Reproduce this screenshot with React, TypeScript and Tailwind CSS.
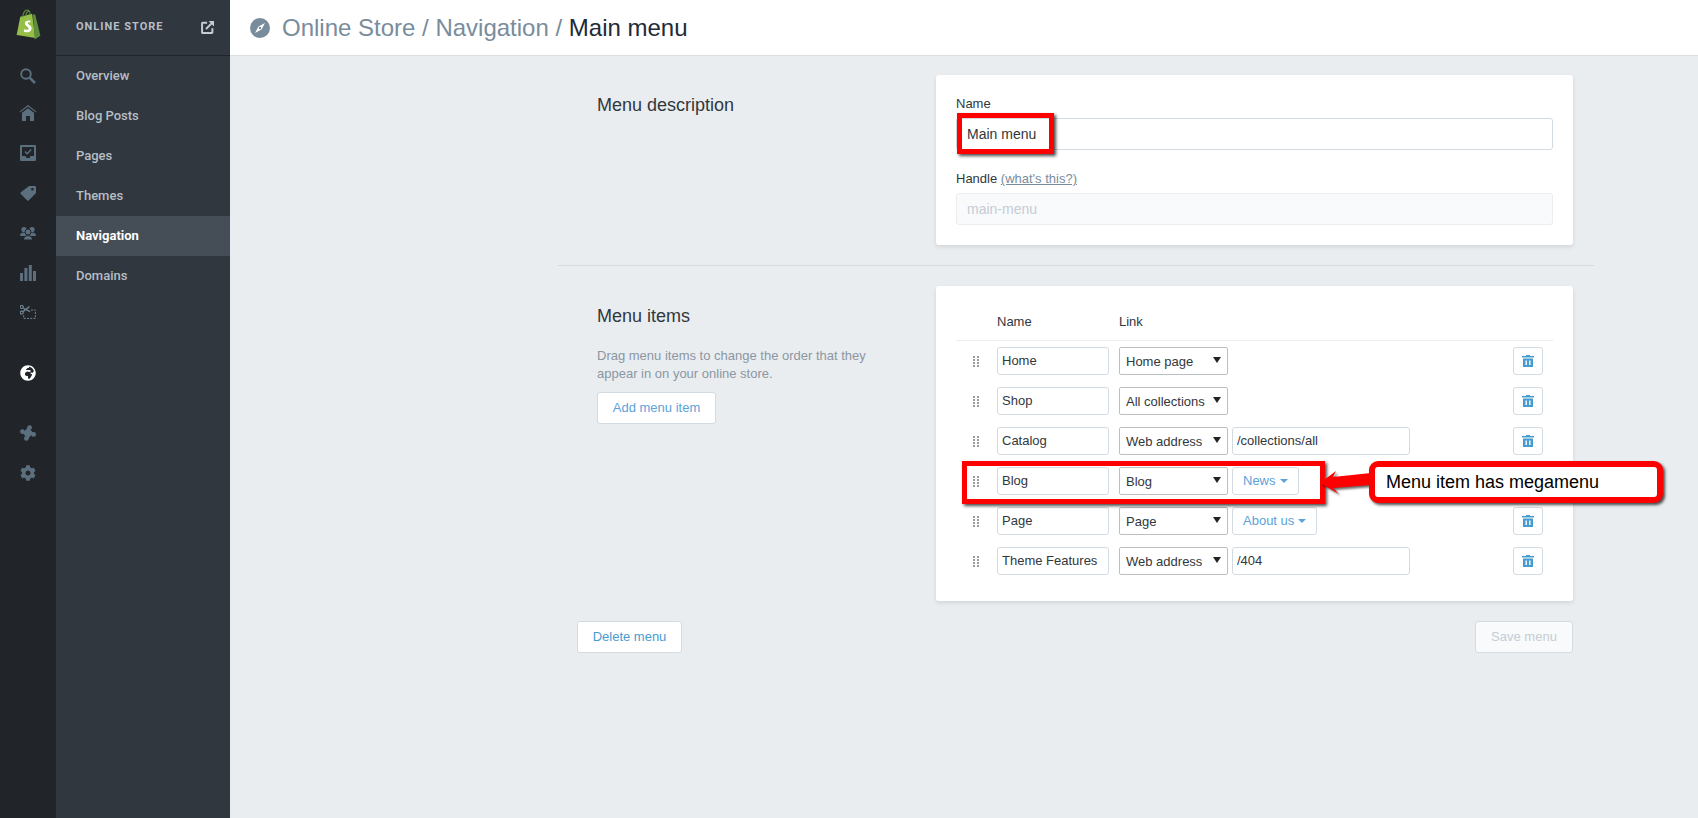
import React from 'react';
import { FaCog, FaGlobeAfrica } from 'react-icons/fa';

const storeLinks = ['Overview', 'Blog Posts', 'Pages', 'Themes', 'Navigation', 'Domains'];

type MenuRow = { name: string; link: string; target?: string; picker?: string };

const menuRows: MenuRow[] = [
  { name: 'Home', link: 'Home page' },
  { name: 'Shop', link: 'All collections' },
  { name: 'Catalog', link: 'Web address', target: '/collections/all' },
  { name: 'Blog', link: 'Blog', picker: 'News' },
  { name: 'Page', link: 'Page', picker: 'About us' },
  { name: 'Theme Features', link: 'Web address', target: '/404' },
];

const ShopifyLogo = () => (
  <svg width="28" height="31" viewBox="0 0 26 30">
    <path d="M2 25.5 5.5 7.5 17 4.5 20 28 1 25z" fill="#95bf47" />
    <path d="M17.8 5.2 20 5.6 25 26 19.5 29.5z" fill="#5e8e3e" />
    <path d="M8 8c0-4 2-7 4-7s3 2 3 5M11 7c0-3 1-5 3-5" fill="none" stroke="#5e8e3e" strokeWidth="1.1" />
    <path d="M15.6 11.5c-3-1.2-5.6.2-5.6 2.6 0 2.5 3.6 2.8 3.6 4.7 0 1.6-2.2 1.7-4 .5l-.7 2.6c3.6 1.6 7.6.4 7.6-3.2 0-3-3.6-3.2-3.6-4.8 0-1 1.4-1.2 2.2-.8z" fill="#fff" />
  </svg>
);

const SearchIcon = () => (
  <svg width="16" height="16" viewBox="0 0 16 16" fill="none" stroke="#5c6f7f">
    <circle cx="6" cy="6" r="4.8" strokeWidth="1.9" />
    <path d="M9.8 9.8 15 15" strokeWidth="2.6" />
  </svg>
);

const HouseIcon = () => (
  <svg width="16" height="16" viewBox="0 0 16 16" fill="#5c6f7f">
    <path d="M8 0 16 6.2V7.6L8 1.6 0 7.6V6.2z" />
    <path fillRule="evenodd" d="M8 3.2 14 7.8V16H10V11H6V16H2V7.8z" />
  </svg>
);

const InboxIcon = () => (
  <svg width="16" height="16" viewBox="0 0 16 16">
    <path fillRule="evenodd" d="M1 0h14a1 1 0 0 1 1 1v14a1 1 0 0 1-1 1H1a1 1 0 0 1-1-1V1a1 1 0 0 1 1-1zm1 2v9h3.5l1 2h3l1-2H14V2z" fill="#5c6f7f" />
    <path d="M5 6.5 7.2 8.7 11.2 4.6" fill="none" stroke="#5c6f7f" strokeWidth="1.5" />
  </svg>
);

const TagIcon = () => (
  <svg width="16" height="16" viewBox="0 0 16 16">
    <path fillRule="evenodd" d="M9 1h5.8c.7 0 1.2.5 1.2 1.2V8l-7.4 7.4c-.4.4-1 .4-1.4 0L.6 8.8c-.4-.4-.4-1 0-1.4zM12.4 3a1.3 1.3 0 1 0 0 2.6 1.3 1.3 0 0 0 0-2.6z" fill="#5c6f7f" />
  </svg>
);

const PeopleIcon = () => (
  <svg width="16" height="14" viewBox="0 0 16 14" fill="#5c6f7f">
    <circle cx="4" cy="3.5" r="2.6" />
    <circle cx="12" cy="3.5" r="2.6" />
    <path d="M0 10c0-2.4 1.6-3.4 4-3.4s4 1 4 3.4zM8 10c0-2.4 1.6-3.4 4-3.4s4 1 4 3.4z" />
    <circle cx="8" cy="6" r="3" stroke="#212529" />
    <path d="M3.4 14c0-3 2-4.4 4.6-4.4s4.6 1.4 4.6 4.4z" stroke="#212529" />
  </svg>
);

const BarsIcon = () => (
  <svg width="16" height="16" viewBox="0 0 16 16" fill="#5c6f7f">
    <rect x="0" y="8" width="3" height="8" />
    <rect x="4.4" y="3" width="3" height="13" />
    <rect x="8.8" y="0" width="3" height="16" />
    <rect x="13" y="6" width="3" height="10" />
  </svg>
);

const ScissorsIcon = () => (
  <svg width="16" height="14" viewBox="0 0 16 14" fill="none" stroke="#6f8292" strokeWidth="1.2">
    <circle cx="1.8" cy="2" r="1.5" />
    <circle cx="1.8" cy="7.6" r="1.5" />
    <path d="M3 3 10 6.6M3 6.6 9.5 1.5" strokeWidth="1.4" />
    <path d="M11 5h4.4v8.4H3.7V10" strokeDasharray="2 1.2" strokeWidth="1" />
  </svg>
);

const PuzzleIcon = () => (
  <svg width="16" height="16" viewBox="0 0 16 16" fill="#5c6f7f">
    <polygon points="8,2.5 13.5,8 8,13.5 2.5,8" />
    <circle cx="9.6" cy="2.6" r="2.4" />
    <circle cx="2.4" cy="6.6" r="2.4" />
    <circle cx="13.6" cy="9.4" r="2.4" />
    <circle cx="6.4" cy="13.4" r="2.4" />
  </svg>
);

const ExternalIcon = () => (
  <svg width="13" height="13" viewBox="0 0 12 12" fill="none" stroke="#c4cdd5" strokeWidth="1.8">
    <path d="M5.6 1.6H1.4a.4.4 0 0 0-.4.4v8.6c0 .3.2.5.5.5h8.6c.2 0 .4-.2.4-.4V6.6" />
    <path d="M4.6 7.4 10 2" />
    <path d="M7 0h5v5z" fill="#c4cdd5" stroke="none" />
  </svg>
);

const CompassIcon = () => (
  <svg width="20" height="20" viewBox="0 0 20 20">
    <circle cx="10" cy="10" r="10" fill="#798c9c" />
    <path d="M15 5 11.5 11.5 5 15 8.5 8.5z" fill="#fff" />
    <circle cx="10" cy="10" r="1.2" fill="#798c9c" />
  </svg>
);

const DragHandle = () => (
  <svg width="6" height="11" viewBox="0 0 6 11" fill="#9a9a9a">
    {[0, 3, 6, 9].map((y) => (
      <React.Fragment key={y}>
        <rect x="0" y={y} width="2" height="2" />
        <rect x="4" y={y} width="2" height="2" />
      </React.Fragment>
    ))}
  </svg>
);

const TrashIcon = () => (
  <svg width="12" height="12" viewBox="0 0 12 12">
    <path d="M4 0h4v1h4v1.6H0V1h4z" fill="#479ccf" />
    <path fillRule="evenodd" d="M1 3.6h10V12H1zM3.5 5.5v4.5h1.4V5.5zm3.6 0v4.5h1.4V5.5z" fill="#479ccf" />
  </svg>
);

const LinkSelect = ({ value }: { value: string }) => (
  <div className="relative w-[109px] h-7 shrink-0">
    <select
      defaultValue={value}
      className="w-full h-full appearance-none bg-white border border-[#bcbfc2] rounded-[2px] pl-[6px] pt-[2px] text-[13px] text-[#31373d] outline-none"
    >
      <option>{value}</option>
    </select>
    <span className="absolute right-[7px] top-[10px] w-0 h-0 border-x-[4px] border-x-transparent border-t-[6px] border-t-[#222]" />
  </div>
);

const TextField = ({ value, width }: { value: string; width: string }) => (
  <input
    readOnly
    defaultValue={value}
    className={`${width} h-7 shrink-0 bg-white border border-[#d3dbe2] rounded-[3px] px-1 pb-[2px] text-[13px] text-[#31373d] outline-none`}
  />
);

const Row = ({ row }: { row: MenuRow }) => (
  <div className="flex items-center h-7">
    <div className="w-[41px] pl-[17px] flex items-center shrink-0">
      <DragHandle />
    </div>
    <TextField value={row.name} width="w-[112px]" />
    <div className="ml-[10px]">
      <LinkSelect value={row.link} />
    </div>
    {row.target && (
      <div className="ml-1">
        <TextField value={row.target} width="w-[178px]" />
      </div>
    )}
    {row.picker && (
      <button className="ml-1 h-7 px-[10px] flex items-center gap-1 bg-white border border-[#d3dbe2] rounded-[3px] text-[13px] text-[#5ba3da]">
        {row.picker}
        <span className="w-0 h-0 border-x-[4px] border-x-transparent border-t-[4px] border-t-[#5ba3da]" />
      </button>
    )}
    <button className="ml-auto mr-[10px] w-[30px] h-7 flex items-center justify-center bg-white border border-[#d3dbe2] rounded-[3px]">
      <TrashIcon />
    </button>
  </div>
);

export default function App() {
  return (
    <div
      className="relative flex h-[818px] w-full overflow-hidden bg-[#e9edf0]"
      style={{ fontFamily: '"Liberation Sans", Arial, sans-serif' }}
    >
      {/* icon rail */}
      <aside className="w-14 shrink-0 bg-[#212529] flex flex-col items-center text-[#5c6f7f]">
        <div className="h-[59px] pt-[9px]">
          <ShopifyLogo />
        </div>
        <div className="flex flex-col items-center">
          <div className="h-[34px] flex items-center"><SearchIcon /></div>
          <div className="h-10 flex items-center"><HouseIcon /></div>
          <div className="h-10 flex items-center"><InboxIcon /></div>
          <div className="h-10 flex items-center"><TagIcon /></div>
          <div className="h-10 flex items-center"><PeopleIcon /></div>
          <div className="h-10 flex items-center"><BarsIcon /></div>
          <div className="h-[38px] flex items-center"><ScissorsIcon /></div>
        </div>
        <div className="mt-[22px] h-10 flex items-center text-white"><FaGlobeAfrica size={16} /></div>
        <div className="mt-5 h-10 flex items-center"><PuzzleIcon /></div>
        <div className="h-10 flex items-center"><FaCog size={16} /></div>
      </aside>

      {/* store menu */}
      <nav className="w-[174px] shrink-0 bg-[#31373f]" style={{ fontFamily: 'Roboto, sans-serif' }}>
        <div className="h-[56px] flex items-center justify-between pl-5 pr-4 border-b border-[#212529]">
          <span className="text-[11px] font-bold tracking-[1px] text-[#b6bec6]">ONLINE STORE</span>
          <ExternalIcon />
        </div>
        <div>
          {storeLinks.map((link) => (
            <div
              key={link}
              className={`h-10 flex items-center pl-5 text-[13px] ${
                link === 'Navigation' ? 'bg-[#454e57] text-white font-bold' : 'text-[#b6bec6] font-medium'
              }`}
            >
              {link}
            </div>
          ))}
        </div>
      </nav>

      <main className="flex-1 min-w-0 flex flex-col">
        <header className="h-[56px] shrink-0 bg-white border-b border-[#dcdfe2] flex items-center pl-5 gap-3">
          <CompassIcon />
          <h1 className="text-[24px] text-[#798c9c]">
            Online Store / Navigation / <span className="text-[#212b36]">Main menu</span>
          </h1>
        </header>

        <div className="ml-[328px] w-[1036px] pt-[19px]">
          <section className="flex">
            <div className="w-[378px] pl-[39px] pt-[19px] shrink-0">
              <h2 className="text-[18px] leading-[22px] text-[#31373d]">Menu description</h2>
            </div>
            <div className="w-[637px] h-[170px] bg-white rounded-[3px] shadow-[0_2px_4px_rgba(0,0,0,0.1)] px-5 pt-[21px]">
              <label className="block text-[13px] leading-[16px] h-[22px] text-[#31373d]">Name</label>
              <input
                readOnly
                defaultValue="Main menu"
                className="w-full h-8 border border-[#d3dbe2] rounded-[3px] px-[10px] text-[14px] text-[#31373d] outline-none"
              />
              <div className="mt-[21px] h-[22px] text-[13px] leading-[16px] text-[#31373d]">
                Handle <a className="text-[#798c9c] underline">(what's this?)</a>
              </div>
              <input
                readOnly
                defaultValue="main-menu"
                className="w-full h-8 bg-[#f9fafb] border border-[#ebeef0] rounded-[3px] px-[10px] text-[14px] text-[#c4cdd5] outline-none"
              />
            </div>
          </section>

          <div className="my-5 border-t border-[#d3dbe2]" />

          <section className="flex">
            <div className="w-[378px] pl-[39px] pt-[19px] shrink-0">
              <h2 className="text-[18px] leading-[22px] text-[#31373d]">Menu items</h2>
              <p className="mt-5 w-[290px] text-[13px] leading-[18px] text-[#8c96a3]">
                Drag menu items to change the order that they appear in on your online store.
              </p>
              <button className="mt-[9px] w-[119px] h-8 bg-white border border-[#d3dbe2] rounded-[3px] text-[13px] text-[#5ba3da]">
                Add menu item
              </button>
            </div>
            <div className="w-[637px] bg-white rounded-[3px] shadow-[0_2px_4px_rgba(0,0,0,0.1)] px-5 pt-6 pb-[26px]">
              <div className="flex h-[31px] pt-[2px] pb-[8px] items-center border-b border-[#ebeef0] text-[13px] text-[#31373d]">
                <span className="ml-[41px] w-[122px]">Name</span>
                <span>Link</span>
              </div>
              <div className="mt-[6px] flex flex-col gap-3">
                {menuRows.map((row) => (
                  <Row key={row.name} row={row} />
                ))}
              </div>
            </div>
          </section>

          <div className="mt-5 ml-[19px] mr-[21px] flex justify-between">
            <button className="w-[105px] h-8 bg-white border border-[#d3dbe2] rounded-[3px] text-[13px] text-[#479ccf]">
              Delete menu
            </button>
            <button className="w-[98px] h-8 bg-[#f9fafb] border border-[#d3dbe2] rounded-[3px] text-[13px] text-[#c4cdd5]">
              Save menu
            </button>
          </div>
        </div>
      </main>

      {/* red annotations */}
      <div className="absolute left-[957px] top-[113px] w-[97px] h-[41px] border-[5px] border-[#ff0000] shadow-[2px_2px_3px_rgba(0,0,0,0.7)]" />
      <div className="absolute left-[962px] top-[461px] w-[363px] h-[43px] border-[5px] border-[#ff0000] shadow-[2px_2px_3px_rgba(0,0,0,0.7)]" />
      <svg
        className="absolute left-[1316px] top-[468px] drop-shadow-[2px_2px_1px_rgba(0,0,0,0.6)]"
        width="56"
        height="30"
        viewBox="1316 468 56 30"
      >
        <polygon points="1320,483 1336,471 1333,477 1371,473 1371,485 1333,488 1339,494" fill="#ff0000" />
      </svg>
      <div className="absolute left-[1369px] top-[461px] w-[294px] h-[42px] flex items-center pl-[11px] bg-white border-[6px] border-[#ff0000] rounded-[9px] shadow-[2px_2px_3px_rgba(0,0,0,0.7)] text-[18px] text-black">
        Menu item has megamenu
      </div>
    </div>
  );
}
